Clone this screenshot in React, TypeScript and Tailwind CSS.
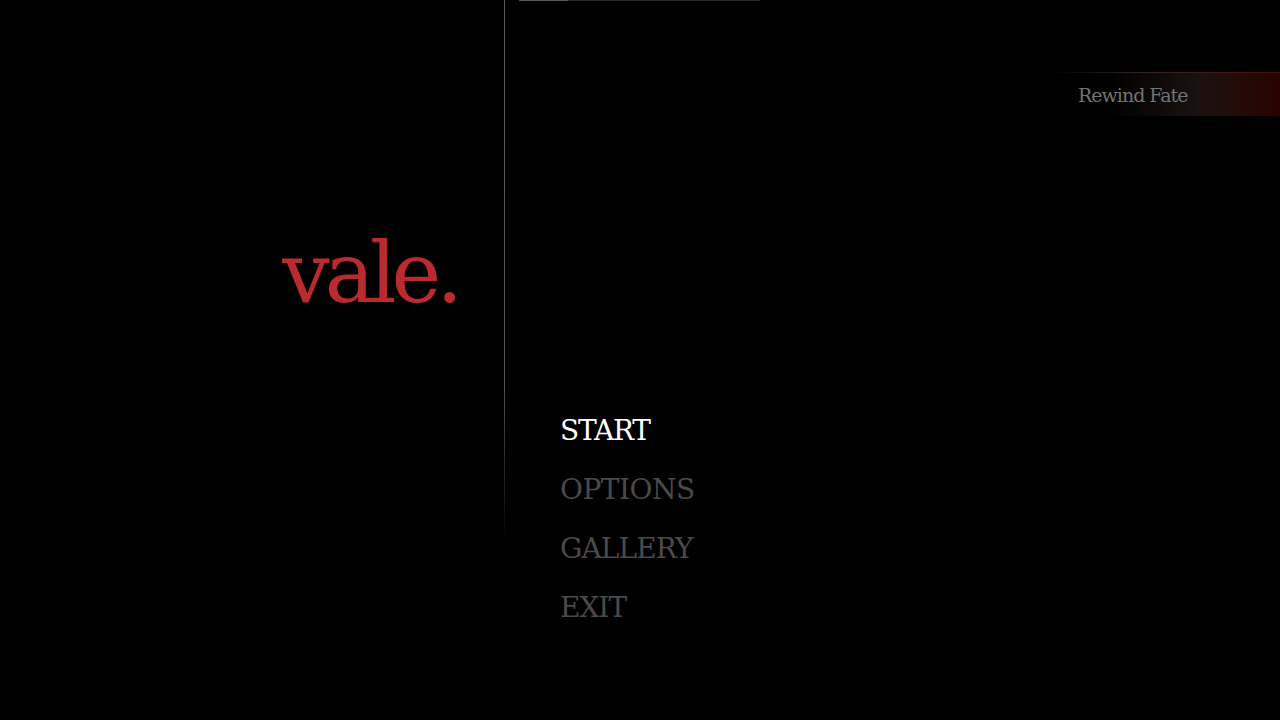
const menuItems = [
  { label: "START", tracking: "tracking-[-1.2px]", color: "text-white" },
  { label: "OPTIONS", tracking: "tracking-[-0.5px]", color: "text-[#4a4a4a]" },
  { label: "GALLERY", tracking: "tracking-[-0.9px]", color: "text-[#4a4a4a]" },
  { label: "EXIT", tracking: "tracking-[-1px]", color: "text-[#4a4a4a]" },
]

const slab = "font-['DejaVu_Serif',serif]"

export default function App() {
  return (
    <div className={`flex h-[720px] w-full overflow-hidden bg-black ${slab}`}>
      {/* logo */}
      <div className="flex w-[504px] justify-end pr-[46px] pt-[225px]">
        <h1 className="text-[84px] leading-[96px] tracking-[-5px] text-[#bb2a2e]">vale.</h1>
      </div>

      {/* divider */}
      <div className="h-[545px] w-px bg-gradient-to-b from-[#5c5c5c] via-[#555555] via-70% to-transparent" />

      <div className="flex flex-1 flex-col">
        {/* progress */}
        <div className="ml-[14px] h-px w-[241px] bg-[#262626]">
          <div className="h-px w-[49px] bg-[#5a5a5a]" />
        </div>

        {/* banner */}
        <div className="mt-[71px] flex h-[44px] justify-end">
          <div className="relative flex w-[232px] items-center bg-gradient-to-r from-transparent from-25% via-[#1a1210] via-65% to-[#2a0200] pl-[30px]">
            <div className="absolute left-0 top-0 h-px w-full bg-gradient-to-r from-transparent via-[#33251f] via-40% to-[#4a0f0a]" />
            <span className="mt-[2px] text-[19px] tracking-[-1px] text-[#737373]">Rewind Fate</span>
          </div>
        </div>

        {/* menu */}
        <nav className="ml-[55px] mt-[295px] flex flex-col gap-[19px]">
          {menuItems.map((item) => (
            <a key={item.label} className={`h-[40px] text-[28px] leading-[40px] ${item.tracking} ${item.color}`}>
              {item.label}
            </a>
          ))}
        </nav>
      </div>
    </div>
  )
}
